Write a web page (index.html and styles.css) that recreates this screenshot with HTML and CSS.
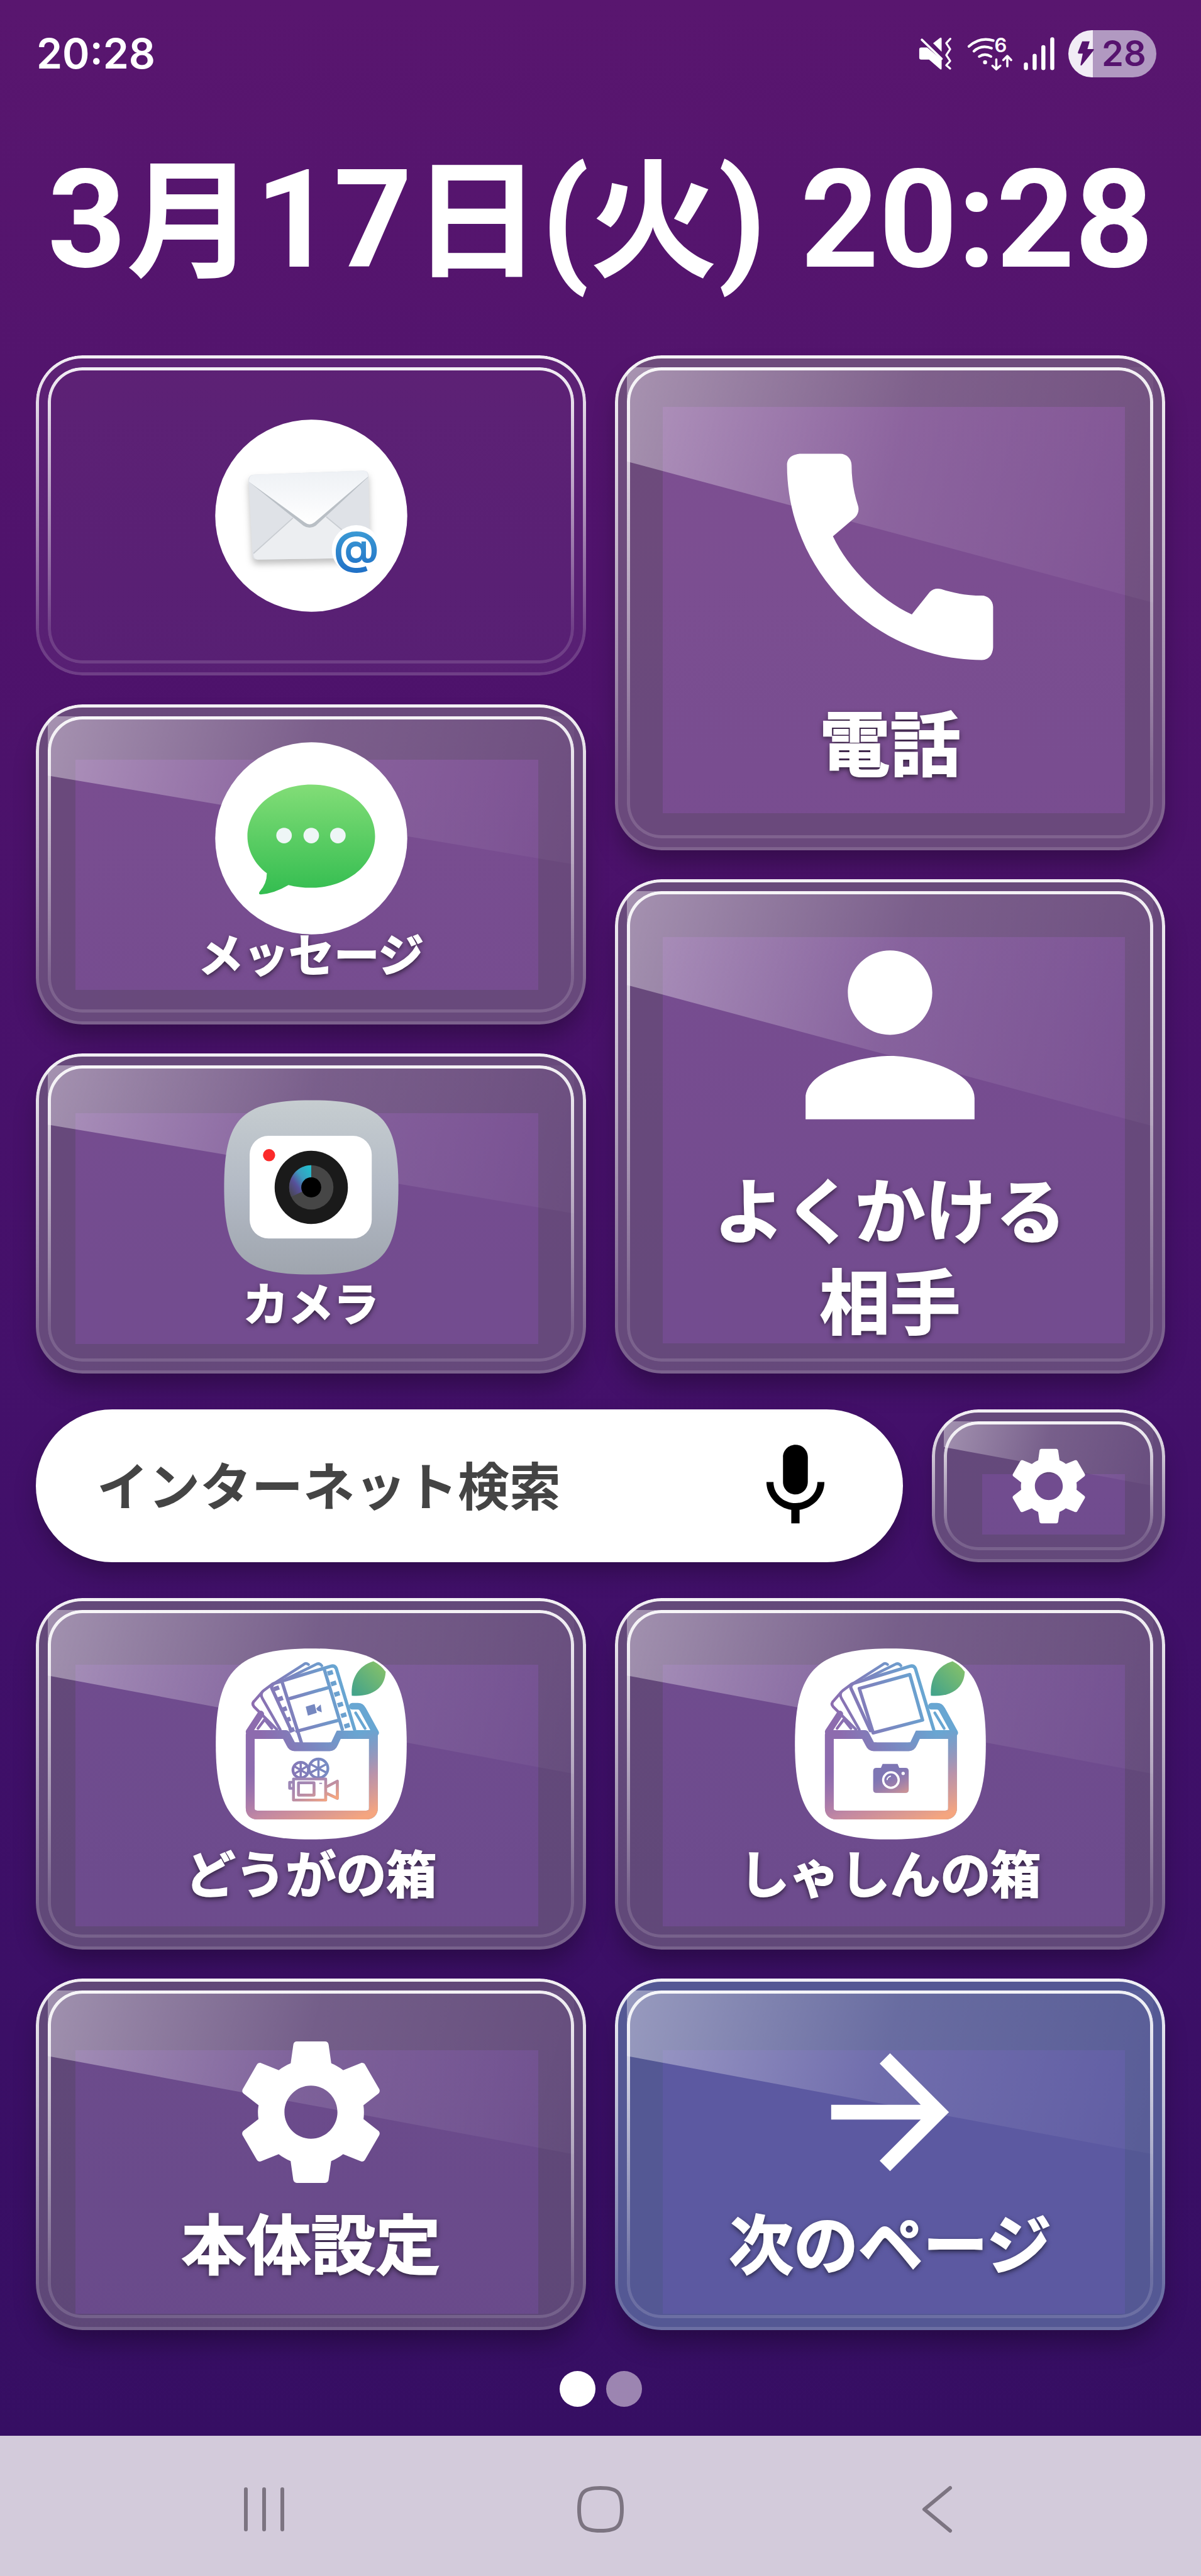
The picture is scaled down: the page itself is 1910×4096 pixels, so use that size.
FILE: index.html
```
<!DOCTYPE html>
<html lang="ja">
<head>
  <meta charset="UTF-8">
  <meta name="viewport" content="width=device-width, initial-scale=1.0">
  <title>ホーム</title>
  <link rel="stylesheet" href="styles.css">
</head>
<body>
  <!-- shared shapes -->
  <svg class="defs" width="0" height="0" aria-hidden="true">
    <defs>
      <symbol id="gear" viewBox="0 0 24 24">
        <path fill="currentColor" d="M19.14 12.94c.04-.3.06-.61.06-.94 0-.32-.02-.64-.07-.94l2.03-1.58c.18-.14.23-.41.12-.61l-1.92-3.32c-.12-.22-.37-.29-.59-.22l-2.39.96c-.5-.38-1.03-.7-1.62-.94l-.36-2.54c-.04-.24-.24-.41-.48-.41h-3.84c-.24 0-.43.17-.47.41l-.36 2.54c-.59.24-1.13.57-1.62.94l-2.39-.96c-.22-.08-.47 0-.59.22L2.74 8.87c-.12.21-.08.47.12.61l2.03 1.58c-.05.3-.09.63-.09.94s.02.64.07.94l-2.03 1.58c-.18.14-.23.41-.12.61l1.92 3.32c.12.22.37.29.59.22l2.39-.96c.5.38 1.03.7 1.62.94l.36 2.54c.05.24.24.41.48.41h3.84c.24 0 .44-.17.47-.41l.36-2.54c.59-.24 1.13-.56 1.62-.94l2.39.96c.22.08.47 0 .59-.22l1.92-3.32c.12-.22.07-.47-.12-.61l-2.01-1.58zM12 15.6c-1.98 0-3.6-1.62-3.6-3.6s1.62-3.6 3.6-3.6 3.6 1.62 3.6 3.6-1.62 3.6-3.6 3.6z"/>
      </symbol>
      <linearGradient id="ink" gradientUnits="userSpaceOnUse" x1="-80" y1="20" x2="80" y2="-30">
        <stop offset="0" stop-color="#8d6bae"/>
        <stop offset=".5" stop-color="#7b86c0"/>
        <stop offset="1" stop-color="#68a6d2"/>
      </linearGradient>
      <linearGradient id="warm" gradientUnits="userSpaceOnUse" x1="80" y1="135" x2="30" y2="0">
        <stop offset="0" stop-color="#f5a57f"/>
        <stop offset=".45" stop-color="#cf8fa0" stop-opacity=".8"/>
        <stop offset="1" stop-color="#b07fb0" stop-opacity="0"/>
      </linearGradient>
      <linearGradient id="warmSmall" gradientUnits="userSpaceOnUse" x1="32" y1="100" x2="8" y2="48">
        <stop offset="0" stop-color="#f5a57f"/>
        <stop offset="1" stop-color="#b07fb0" stop-opacity="0"/>
      </linearGradient>
      <linearGradient id="leaf" x1="1" y1="0" x2="0" y2="1">
        <stop offset="0" stop-color="#8cc466"/>
        <stop offset="1" stop-color="#3fa18c"/>
      </linearGradient>
      <path id="boxFront" fill="none" stroke-width="16" stroke-linejoin="round" d="M-110 -17H-46L-37 0Q-35 5-30 5H33Q38 5 40 0L48 -17H112V115Q112 128 99 128H-97Q-110 128-110 115Z"/>
      <g id="boxBase">
        <path fill="#fff" d="M0 -172C133 -172 172 -133 172 0S133 172 0 172-172 133-172 0-133 -172 0 -172Z"/>
        <path fill="url(#leaf)" d="M73 -87C71 -118 85 -141 112 -149Q126 -142 134 -130C133 -100 108 -84 73 -87Z"/>
        <g fill="none" stroke="url(#ink)" stroke-linejoin="round" stroke-linecap="round">
          <path stroke-width="5" d="M-62 -26L-103 -67Q-108 -73-102 -78L-88 -94M-56 -26L-88 -82Q-93 -91-86 -96L-70 -108M-64 -111L-14 -143Q-9 -147-5 -143M-45 -117L8 -143Q14 -147 19 -141"/>
          <path stroke-width="12" d="M-112 -22L-91 -54M116 -20L93 -62Q90 -68 84 -68H74"/>
          <path stroke-width="5" d="M-96 -28L-84 -44L-71 -28M80 -56L97 -28"/>
        </g>
        <use href="#boxFront" stroke="url(#ink)"/>
        <use href="#boxFront" stroke="url(#warm)"/>
      </g>
    </defs>
  </svg>

  <header class="status">
    <time class="clock">20:28</time>
    <div class="status-icons">
      <svg class="ic-mute" viewBox="98 112 180 178" aria-label="バイブ">
        <g fill="#fff">
          <path d="M112 167H144L222 232V280Q222 290 214 284L154 232H112Q101 232 101 221V178Q101 167 112 167Z"/>
          <path d="M176 144L213 115Q222 110 222 120V190Z"/>
        </g>
        <path d="M115 125L222 228" stroke="#fff" stroke-width="12" stroke-linecap="round"/>
        <path d="M269 120L247 144L268 176L247 208L268 240L247 263L268 281" fill="none" stroke="#fff" stroke-width="11" stroke-linecap="round" stroke-linejoin="round"/>
      </svg>
      <svg class="ic-wifi" viewBox="362 108 248 188" aria-label="Wi-Fi">
        <g fill="none" stroke="#fff" stroke-width="14" stroke-linecap="round" stroke-linejoin="round">
          <path d="M371 162Q430 108 504 130M398 188Q440 150 494 172M427 217Q458 196 491 217"/>
          <path stroke-width="12" d="M520 233V286M499 267L520 286L542 267M580 270V214M558 236L580 214L601 236"/>
        </g>
        <circle cx="459" cy="248" r="11" fill="#fff"/>
        <text x="510" y="193" class="wifi-gen">6</text>
      </svg>
      <svg class="ic-signal" viewBox="665 112 166 178" aria-label="電波">
        <path d="M677 259V278M724 212V278M771 165V278M819 123V278" stroke="#fff" stroke-width="22" stroke-linecap="round"/>
      </svg>
      <div class="battery">
        <svg viewBox="958 130 88 134" aria-hidden="true"><path fill="#56136e" d="M982 132H1022L1010 173H1042Q1048 175 1043 181L980 260Q972 266 973 256L985 198H962Q957 196 959 190Z"/></svg>
        <span>28</span>
      </div>
    </div>
  </header>

  <main>
    <h1>3<span class="kanji">月</span>17<span class="kanji">日</span>(<span class="kanji">火</span>) 20:28</h1>

    <div class="columns">
      <div class="column">
        <button class="tile app mail" aria-label="メール">
          <svg class="app-icon" viewBox="-162 -162 324 324">
            <defs>
              <linearGradient id="flap" x1="0" y1="0" x2="0" y2="1"><stop offset="0" stop-color="#eef1f5"/><stop offset="1" stop-color="#fff"/></linearGradient>
              <linearGradient id="at" x1="0" y1="0" x2="0" y2="1"><stop offset="0" stop-color="#42a4d8"/><stop offset="1" stop-color="#1f6fc6"/></linearGradient>
            </defs>
            <circle r="173" fill="#fff"/>
            <path class="envelope" fill="#dfe2e7" d="M-104 -74L94 -81Q103 -81 103 -72L106 68Q106 76 98 76L-97 79Q-106 79-106 70L-113 -65Q-113 -73-104 -74Z"/>
            <path fill="#eceef1" d="M-104 68L-33 4L27 2L104 70Q103 76 98 76L-97 79Q-104 78-104 68Z"/>
            <path fill="none" stroke="#c9cdd2" stroke-width="2" d="M-104 68L-33 4M27 2L80 46"/>
            <path fill="#b9bfc5" d="M-112 -61L-14 18Q-3 25 8 18L103 -70L60 -60H-60Z"/>
            <path fill="url(#flap)" d="M-104 -74L94 -81Q103 -81 102 -70L6 12Q-3 19-12 12L-112 -61Q-113 -73-104 -74Z"/>
            <circle cx="81" cy="61" r="44" fill="#fff"/>
            <text class="at" x="81" y="86" text-anchor="middle">@</text>
          </svg>
        </button>
        <button class="tile app message">
          <span class="glass"></span>
          <svg class="app-icon" viewBox="-162 -162 324 324" aria-hidden="true">
            <defs><linearGradient id="green" x1="0" y1="0" x2="0" y2="1"><stop offset="0" stop-color="#82dd77"/><stop offset="1" stop-color="#33bd50"/></linearGradient></defs>
            <circle r="173" fill="#fff"/>
            <path fill="url(#green)" d="M0 -97C64 -97 115 -56 115 -4S64 89 0 89Q-22 89-41 84Q-66 99-91 101Q-96 101-93 96Q-80 82-80 63C-102 46-115 22-115 -4C-115 -56-64 -97 0 -97Z"/>
            <g fill="#eef6f6"><circle cx="-49" cy="-5" r="14"/><circle cx="0" cy="-5" r="14"/><circle cx="48" cy="-5" r="14"/></g>
          </svg>
          <span class="label">メッセージ</span>
        </button>
        <button class="tile app camera">
          <span class="glass"></span>
          <svg class="app-icon" viewBox="-162 -162 324 324" aria-hidden="true">
            <defs>
              <linearGradient id="silver" x1="0" y1="0" x2="0" y2="1"><stop offset="0" stop-color="#c6cdd0"/><stop offset=".5" stop-color="#b3bac5"/><stop offset="1" stop-color="#9fa5ae"/></linearGradient>
              <linearGradient id="flare" x1="1" y1="0" x2="0" y2="1"><stop offset="0" stop-color="#1fc3cf"/><stop offset=".4" stop-color="#3a9cc0"/><stop offset=".65" stop-color="#57509a"/><stop offset="1" stop-color="#444"/></linearGradient>
            </defs>
            <path fill="url(#silver)" d="M0 -157C125 -157 157 -125 157 0S125 157 0 157-157 125-157 0-125 -157 0 -157Z"/>
            <rect x="-111" y="-93" width="220" height="185" rx="34" fill="#fff"/>
            <circle cx="-76" cy="-58" r="11" fill="#fb2a2a"/>
            <circle r="66" fill="#1a1a1a"/>
            <circle r="40" fill="#464646"/>
            <path fill="url(#flare)" d="M0 0V-40A40 40 0 0 0-36 17Z"/>
            <circle r="18"/>
          </svg>
          <span class="label">カメラ</span>
        </button>
      </div>
      <div class="column">
        <button class="tile call">
          <span class="glass"></span>
          <svg class="icon-call" viewBox="0 0 24 24" aria-hidden="true"><path fill="#fff" d="M20.010 15.380c-1.230 0-2.420-.2-3.530-.56-.35-.12-.74-.03-1.010.24l-1.570 1.970c-2.830-1.350-5.480-3.900-6.890-6.830l1.950-1.660c.27-.28.35-.67.24-1.020-.37-1.110-.56-2.300-.56-3.530 0-.54-.45-.99-.99-.99H4.190C3.650 3 3 3.240 3 3.990 3 13.280 10.730 21 20.010 21c.71 0 .99-.63.99-1.180v-3.450c0-.54-.45-.99-.99-.99z"/></svg>
          <span class="label">電話</span>
        </button>
        <button class="tile call favorite">
          <span class="glass"></span>
          <svg class="icon-person" viewBox="0 0 24 24" aria-hidden="true"><path fill="#fff" d="M12 12c2.210 0 4-1.790 4-4s-1.790-4-4-4-4 1.790-4 4 1.790 4 4 4zm0 2c-2.670 0-8 1.340-8 4v2h16v-2c0-2.660-5.330-4-8-4z"/></svg>
          <span class="label">よくかける<br>相手</span>
        </button>
      </div>
    </div>

    <div class="search-row">
      <form class="search">
        <input type="text" placeholder="インターネット検索" aria-label="インターネット検索">
        <button type="button" class="mic" aria-label="音声検索">
          <svg viewBox="0 0 24 24"><path d="M12 14c1.660 0 2.990-1.340 2.990-3L15 5c0-1.660-1.340-3-3-3S9 3.340 9 5v6c0 1.660 1.340 3 3 3zm5.300-3c0 3-2.540 5.100-5.300 5.100S6.700 14 6.700 11H5c0 3.410 2.720 6.230 6 6.720V21h2v-3.280c3.280-.48 6-3.300 6-6.720h-1.700z"/></svg>
        </button>
      </form>
      <button class="tile options" aria-label="設定">
        <span class="glass"></span>
        <svg class="icon-options"><use href="#gear"/></svg>
      </button>
    </div>

    <div class="grid">
      <button class="tile box movie">
        <span class="glass"></span>
        <svg class="box-icon" viewBox="-179 -179 358 358" aria-hidden="true">
          <use href="#boxBase"/>
          <path fill="#fff" d="M-70 -107L43 -142L80 -24L46 -24L36 -3H-18L-36 -24Z"/>
          <g fill="none" stroke="url(#ink)" stroke-width="6" stroke-linejoin="round" stroke-linecap="round">
            <path d="M-36 -24L-71 -100Q-73 -106-67 -109L35 -140Q42 -142 45 -136L78 -26M-53 -113L-18 -3M23 -136L56 -26M-38 -82L29 -101M-26 -23L47 -42"/>
          </g>
          <g stroke="url(#ink)" stroke-width="10" stroke-dasharray="8 12">
            <path d="M-64 -104L-32 -16"/>
            <path d="M33 -132L66 -28"/>
          </g>
          <path fill="#7688c0" d="M-10 -67L6 -72L10 -56L-6 -51ZM9 -64L17 -71L19 -57L11 -60Z"/>
          <g fill="none" stroke="url(#ink)" stroke-width="5" stroke-linejoin="round">
            <circle cx="-19" cy="47" r="14"/><circle cx="13" cy="44" r="17"/>
            <path stroke-width="4" d="M-19 33V61M-31 40L-7 54M-31 54L-7 40M13 27V61M-2 36L28 52M-2 52L28 36"/>
          </g>
          <g fill="none" stroke-width="5" stroke-linejoin="round">
            <path stroke="#9c86b6" d="M-32 63H26V101H-32ZM-23 70H5V92H-23ZM26 78L47 67V98L26 88M-32 69H-39V80H-32M17 70V72"/>
            <path stroke="url(#warmSmall)" d="M-32 63H26V101H-32ZM-23 70H5V92H-23ZM26 78L47 67V98L26 88"/>
          </g>
        </svg>
        <span class="label">どうがの箱</span>
      </button>
      <button class="tile box photo">
        <span class="glass"></span>
        <svg class="box-icon" viewBox="-179 -179 358 358" aria-hidden="true">
          <use href="#boxBase"/>
          <path fill="#fff" d="M-70 -107L43 -142L80 -24L46 -24L36 -3H-25L-36 -24Z"/>
          <g fill="none" stroke="url(#ink)" stroke-width="6" stroke-linejoin="round" stroke-linecap="round">
            <path d="M-36 -24L-71 -100Q-73 -106-67 -109L35 -140Q42 -142 45 -136L78 -26"/>
            <path d="M-56 -100L35 -125L58 -43L-31 -20Z"/>
          </g>
          <path fill="#7e76b4" d="M-25 43H-17L-14 36H13L16 43H27Q33 43 33 49V82Q33 88 27 88H-25Q-31 88-31 82V49Q-31 43-25 43Z"/>
          <path fill="url(#warmSmall)" d="M-25 43H27Q33 43 33 49V82Q33 88 27 88H-25Q-31 88-31 82V49Q-31 43-25 43Z"/>
          <circle cx="1" cy="65" r="14" fill="none" stroke="#fff" stroke-width="4"/>
          <circle cx="23" cy="53" r="3" fill="#fff"/>
          <path fill="none" stroke="#fff" stroke-width="2" d="M-6 65Q-5 59 1 58"/>
        </svg>
        <span class="label">しゃしんの箱</span>
      </button>
      <button class="tile system">
        <span class="glass"></span>
        <svg class="icon-system" aria-hidden="true"><use href="#gear"/></svg>
        <span class="label">本体設定</span>
      </button>
      <button class="tile system next">
        <span class="glass"></span>
        <svg class="icon-system" viewBox="0 0 24 24" aria-hidden="true"><path fill="#fff" d="M12 4l-1.410 1.410L16.170 11H4v2h12.170l-5.580 5.590L12 20l8-8z"/></svg>
        <span class="label">次のページ</span>
      </button>
    </div>

    <div class="pager">
      <span class="dot active"></span>
      <span class="dot"></span>
    </div>
  </main>

  <nav class="navbar">
    <button aria-label="履歴"><svg viewBox="0 0 80 80"><path d="M11 8V72M40 8V72M69 8V72"/></svg></button>
    <button aria-label="ホーム"><svg viewBox="0 0 80 80"><path d="M40 6C67 6 74 13 74 40S67 74 40 74 6 67 6 40 13 6 40 6Z"/></svg></button>
    <button aria-label="戻る"><svg viewBox="0 0 80 80"><path d="M61 6L20 40L61 74"/></svg></button>
  </nav>
</body>
</html>
```
FILE: styles.css
```
:root {
  --frame: rgba(64, 64, 64, 0.25);
  --edge: linear-gradient(rgba(255, 255, 255, 0.92), rgba(255, 255, 255, 0.85) 12%, rgba(255, 255, 255, 0.14) 88%);
}
* {
  box-sizing: border-box;
}
body {
  margin: 0;
  min-height: 100vh;
  display: flex;
  flex-direction: column;
  background: linear-gradient(#59166f, #4c126b 30%, #42106a 58%, #340e62);
  color: #fff;
  font-family: "Noto Sans CJK JP", sans-serif;
  font-weight: 700;
}
button {
  border: none;
  padding: 0;
  background: none;
  color: inherit;
  font: inherit;
  cursor: pointer;
}
svg {
  display: block;
  flex: none;
}
.defs {
  position: absolute;
}

/* status bar */
.status {
  display: flex;
  justify-content: space-between;
  align-items: center;
  height: 170px;
  padding: 0 71px 0 58px;
  font-family: Inter, sans-serif;
  font-weight: 600;
}
.clock {
  font-size: 66px;
  line-height: 80px;
}
.status-icons {
  display: flex;
  align-items: center;
}
.ic-mute {
  width: 53px;
  height: 53px;
  margin-right: 24px;
}
.ic-wifi {
  width: 73px;
  height: 55px;
  margin-right: 17px;
  overflow: visible;
}
.ic-signal {
  width: 49px;
  height: 53px;
  margin-right: 22px;
}
.wifi-gen {
  font: 600 106px Inter, sans-serif;
  fill: #fff;
}
.battery {
  display: flex;
  align-items: center;
  width: 140px;
  height: 75px;
  padding-left: 15px;
  border-radius: 38px;
  background: linear-gradient(90deg, #f1ecf5 39px, #b199c1 39px);
  color: #56136e;
  font-size: 56px;
  line-height: 75px;
}
.battery svg {
  width: 26px;
  height: 40px;
  margin-right: 12px;
}

/* home screen */
main {
  padding: 0 57px;
}
h1 {
  margin: 0;
  height: 395px;
  font-family: Roboto, "Noto Sans CJK JP", sans-serif;
  font-size: 218px;
  line-height: 360px;
  text-align: center;
  white-space: nowrap;
}
.kanji {
  font-size: 205px;
}
.columns,
.grid {
  display: grid;
  grid-template-columns: 1fr 1fr;
  gap: 46px;
}
.column {
  display: flex;
  flex-direction: column;
  gap: 46px;
}

/* glass tiles */
.tile {
  position: relative;
  overflow: hidden;
  display: flex;
  flex-direction: column;
  align-items: center;
  justify-content: center;
  border-radius: 74px;
  background: rgba(255, 255, 255, 0.25);
  box-shadow: 0 26px 40px -6px rgba(0, 0, 0, 0.3);
}
.tile::before,
.tile::after {
  content: "";
  position: absolute;
  z-index: 1;
  inset: 0;
  padding: 5px;
  border-radius: 74px;
  background: var(--edge);
  mask: linear-gradient(#000 0 0) content-box exclude, linear-gradient(#000 0 0);
}
.tile::after {
  inset: 19px;
  border-radius: 55px;
}
.glass::before,
.glass::after {
  content: "";
  position: absolute;
}
.glass::before {
  inset: var(--pane);
  box-shadow: 0 0 0 200px var(--frame);
}
.glass::after {
  inset: 19px;
  background: linear-gradient(105deg, rgba(255, 255, 255, 0.4), rgba(255, 255, 255, 0.12) 45%, rgba(255, 255, 255, 0.01));
  clip-path: polygon(0 0, 100% 0, 100% 50%, 0 20%);
}
.tile > svg,
.label {
  position: relative;
}
.label {
  text-shadow: 0 3px 9px rgba(0, 0, 0, 0.7);
  -webkit-text-stroke: 2px #fff;
  white-space: nowrap;
}

.app {
  height: 509px;
}
.app-icon {
  width: 286px;
  height: 286px;
  overflow: visible;
}
.app .label {
  margin-top: -8px;
  font-size: 72px;
  line-height: 92px;
}
.mail {
  background: rgba(255, 255, 255, 0.06);
  box-shadow: none;
}
.envelope {
  filter: drop-shadow(0 8px 6px rgba(0, 0, 0, 0.25));
}
.at {
  font: 700 80px Inter, sans-serif;
  fill: url(#at);
}
.message { --pane: 88px 76px 55px 63px; }
.camera { --pane: 95px 76px 47px 63px; }

.call {
  --pane: 82px 64px 59px 76px;
  flex: 1;
}
.call .label {
  font-size: 112px;
  line-height: 145px;
}
.favorite { --pane: 92px 64px 48px 76px; }
.icon-call {
  width: 437px;
  height: 437px;
}
.icon-person {
  width: 403px;
  height: 403px;
}

/* search */
.search-row {
  display: flex;
  gap: 46px;
  margin: 57px 0;
}
.search {
  flex: 1;
  min-width: 0;
  display: flex;
  align-items: center;
  height: 243px;
  padding: 0 92px 0 97px;
  border-radius: 122px;
  background: #fff;
  box-shadow: 0 20px 40px -6px rgba(0, 0, 0, 0.3);
}
.search input {
  flex: 1;
  min-width: 0;
  height: 120px;
  margin-bottom: 8px;
  padding: 0;
  border: none;
  outline: none;
  background: none;
  color: #444;
  font: inherit;
  font-size: 82px;
}
.search input::placeholder {
  color: #444;
  opacity: 1;
}
.mic svg {
  width: 158px;
  height: 158px;
}
.options {
  --pane: 103px 64px 44px 80px;
  flex: none;
  width: 371px;
}
.icon-options {
  width: 148px;
  height: 148px;
}

/* lower tiles */
.box,
.system {
  height: 559px;
}
.box-icon {
  width: 316px;
  height: 316px;
}
.box .label {
  margin-top: -8px;
  font-size: 80px;
  line-height: 104px;
}
.movie { --pane: 106px 76px 37px 63px; }
.photo { --pane: 106px 64px 37px 76px; }
.system {
  --pane: 114px 76px 26px 63px;
}
.icon-system {
  width: 281px;
  height: 281px;
}
.system .label {
  margin-top: -4px;
  font-size: 103px;
  line-height: 138px;
}
.next {
  --pane: 114px 64px 26px 76px;
  --frame: rgba(60, 88, 110, 0.25);
  background: #5c59a1;
}

.pager {
  display: flex;
  justify-content: center;
  gap: 17px;
  padding: 65px 0 46px;
}
.dot {
  width: 57px;
  height: 57px;
  border-radius: 50%;
  background: #9c85b1;
}
.dot.active {
  background: #fff;
}

/* system navigation */
.navbar {
  display: flex;
  justify-content: center;
  flex: 1;
  min-height: 220px;
  padding-top: 10px;
  background: #d3cbdb;
}
.navbar button {
  display: flex;
  align-items: center;
  justify-content: center;
  width: 535px;
}
.navbar svg {
  width: 80px;
  height: 80px;
  fill: none;
  stroke: #7c7481;
  stroke-width: 6;
  stroke-linecap: round;
  stroke-linejoin: round;
}
```
